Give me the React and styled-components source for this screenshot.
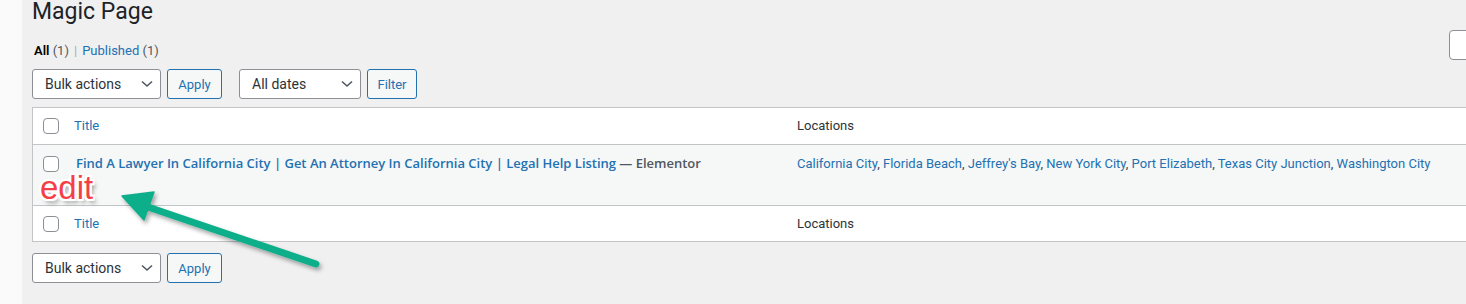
import React from 'react';
import styled, { createGlobalStyle } from 'styled-components';

const GlobalStyle = createGlobalStyle`
  html, body {
    margin: 0;
    padding: 0;
    background: #f0f0f1;
    overflow: hidden;
  }
  body {
    font-family: Roboto, 'Noto Sans', Arial, sans-serif;
    font-size: 13px;
    color: #3c434a;
  }
`;

const Screen = styled.div`
  display: flex;
  width: 1800px;
  height: 304px;
  position: relative;
`;

const MenuEdge = styled.div`
  width: 22px;
  background: #fafafa;
  flex-shrink: 0;
`;

const Wrap = styled.div`
  padding-left: 10px;
  flex: 1;
`;

const Heading = styled.h1`
  margin: -3px 0 0;
  font-size: 23px;
  font-weight: 400;
  line-height: 29px;
  color: #1d2327;
`;

const TopRow = styled.div`
  display: grid;
  grid-template-columns: 1417px 200px;
  align-items: start;
`;

const SubSub = styled.ul`
  list-style: none;
  margin: 15px 0 0;
  padding: 0 0 0 2px;
  display: flex;
  gap: 5px;
  line-height: 20px;
  color: #646970;
`;

const SubItem = styled.li`
  color: ${(p) => (p.current ? '#000' : '#2271b1')};
  font-weight: ${(p) => (p.current ? 600 : 400)};
`;

const Count = styled.span`
  color: #50575e;
  font-weight: 400;
`;

const Sep = styled.li`
  color: #a7aaad;
`;

const SearchInput = styled.div`
  margin-top: 4px;
  height: 28px;
  border: 1px solid #8c8f94;
  border-radius: 4px;
  background: #fff;
`;

const TableNav = styled.div`
  display: flex;
  align-items: center;
  height: 30px;
  margin: ${(p) => p.margin};
`;

const Select = styled.div`
  box-sizing: border-box;
  width: ${(p) => p.w}px;
  height: 30px;
  border: 1px solid #8c8f94;
  border-radius: 3px;
  background: #fff;
  display: flex;
  align-items: center;
  justify-content: space-between;
  padding: 0 7px 0 12px;
  font-size: 14px;
  color: #2c3338;
  margin-right: 6px;
`;

const Button = styled.div`
  box-sizing: border-box;
  width: ${(p) => p.w}px;
  height: 30px;
  border: 1px solid #2271b1;
  border-radius: 3px;
  background: #f6f7f7;
  color: #2271b1;
  display: flex;
  align-items: center;
  justify-content: center;
  margin-right: ${(p) => p.mr || 0}px;
`;

const Table = styled.div`
  margin-top: 8px;
  width: 1600px;
  border: 1px solid #c3c4c7;
  background: #fff;
`;

const Row = styled.div`
  display: grid;
  grid-template-columns: 41px 713px 1fr;
  height: ${(p) => p.h}px;
  background: ${(p) => (p.striped ? '#f6f7f7' : '#fff')};
  border-top: ${(p) => (p.divider ? '1px solid #c3c4c7' : 'none')};
  border-bottom: ${(p) => (p.underline ? '1px solid #c3c4c7' : 'none')};
`;

const Cell = styled.div`
  padding: ${(p) => p.pad};
  line-height: 19px;
`;

const Check = styled.span`
  display: block;
  box-sizing: border-box;
  width: 16px;
  height: 16px;
  border: 1px solid #8c8f94;
  border-radius: 4px;
  background: #fff;
  margin-left: 10px;
`;

const HeadLink = styled.span`
  color: #2271b1;
`;

const RowTitle = styled.span`
  font-family: 'Open Sans', Roboto, sans-serif;
  color: #2271b1;
  font-weight: 600;
`;

const PostState = styled.span`
  font-family: 'Open Sans', Roboto, sans-serif;
  color: #50575e;
  font-weight: 600;
`;

const HeadText = styled.span`
  color: #2c3338;
`;

const LocLink = styled.span`
  color: #2271b1;
`;

const EditLabel = styled.div`
  position: absolute;
  left: 40px;
  top: 171px;
  font-family: 'Liberation Sans', Arial, sans-serif;
  font-size: 33px;
  line-height: 34px;
  color: #f63e46;
  text-shadow:
    -2px 0 #fff, 2px 0 #fff, 0 -2px #fff, 0 2px #fff,
    -2px -2px #fff, 2px 2px #fff, -2px 2px #fff, 2px -2px #fff,
    3px 4px 4px rgba(0, 0, 0, 0.45);
`;

const ArrowLayer = styled.svg`
  position: absolute;
  left: 0;
  top: 0;
  pointer-events: none;
`;

const Chevron = () => (
  <svg width="12" height="8" viewBox="0 0 12 8">
    <polyline points="1,1.5 6,6 11,1.5" fill="none" stroke="#50575e" strokeWidth="1.6" />
  </svg>
);

const locations = [
  'California City',
  'Florida Beach',
  "Jeffrey's Bay",
  'New York City',
  'Port Elizabeth',
  'Texas City Junction',
  'Washington City',
];

const App = () => (
  <>
    <GlobalStyle />
    <Screen>
      <MenuEdge />
      <Wrap>
        <Heading>Magic Page</Heading>
        <TopRow>
          <SubSub>
            <SubItem current>
              All <Count>(1)</Count>
            </SubItem>
            <Sep>|</Sep>
            <SubItem>
              Published <Count>(1)</Count>
            </SubItem>
          </SubSub>
          <SearchInput />
        </TopRow>
        <TableNav margin="8px 0 0">
          <Select w={129}>
            Bulk actions <Chevron />
          </Select>
          <Button w={55} mr={17}>Apply</Button>
          <Select w={122}>
            All dates <Chevron />
          </Select>
          <Button w={50}>Filter</Button>
        </TableNav>
        <Table>
          <Row h={36} underline>
            <Cell pad="10px 0 0">
              <Check />
            </Cell>
            <Cell pad="8px 0 0">
              <HeadLink>Title</HeadLink>
            </Cell>
            <Cell pad="8px 0 0 10px">
              <HeadText>Locations</HeadText>
            </Cell>
          </Row>
          <Row h={60} striped>
            <Cell pad="11px 0 0">
              <Check />
            </Cell>
            <Cell pad="9px 0 0 2px">
              <RowTitle>
                Find A Lawyer In California City | Get An Attorney In California City | Legal Help Listing
              </RowTitle>{' '}
              <PostState>— Elementor</PostState>
            </Cell>
            <Cell pad="9px 0 0 10px">
              {locations.map((l, i) => (
                <React.Fragment key={l}>
                  <LocLink>{l}</LocLink>
                  {i < locations.length - 1 ? ', ' : ''}
                </React.Fragment>
              ))}
            </Cell>
          </Row>
          <Row h={35} divider>
            <Cell pad="10px 0 0">
              <Check />
            </Cell>
            <Cell pad="8px 0 0">
              <HeadLink>Title</HeadLink>
            </Cell>
            <Cell pad="8px 0 0 10px">
              <HeadText>Locations</HeadText>
            </Cell>
          </Row>
        </Table>
        <TableNav margin="11px 0 0">
          <Select w={129}>
            Bulk actions <Chevron />
          </Select>
          <Button w={55}>Apply</Button>
        </TableNav>
      </Wrap>
      <EditLabel>edit</EditLabel>
      <ArrowLayer width="400" height="304" viewBox="0 0 400 304">
        <defs>
          <filter id="arrowShadow" x="-20%" y="-20%" width="140%" height="140%">
            <feDropShadow dx="2" dy="3" stdDeviation="2" floodColor="#000" floodOpacity="0.35" />
          </filter>
        </defs>
        <g filter="url(#arrowShadow)" fill="#0fae8a" stroke="#0fae8a">
          <line x1="316" y1="264" x2="142" y2="205" strokeWidth="7" strokeLinecap="round" />
          <polygon points="122,196 154,192 144,220" strokeWidth="1.5" strokeLinejoin="round" />
        </g>
      </ArrowLayer>
    </Screen>
  </>
);

export default App;
